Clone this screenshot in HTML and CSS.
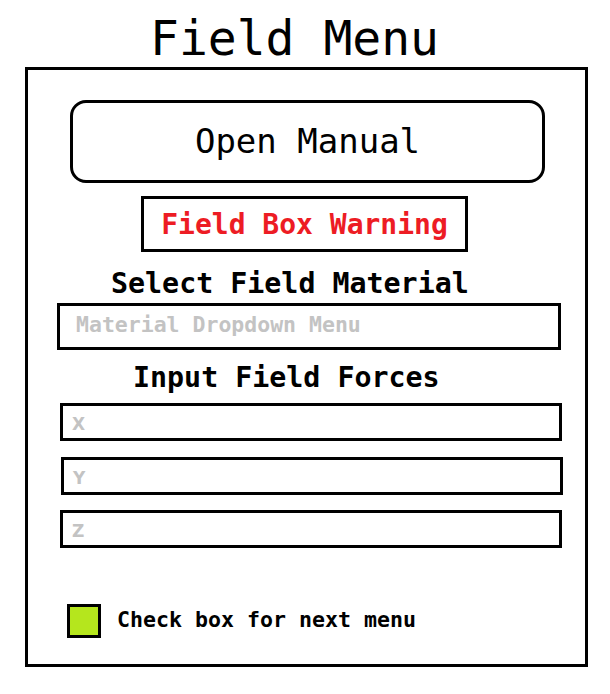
FILE: index.html
```html
<!DOCTYPE html>
<html>
<head>
<meta charset="utf-8">
<link rel="stylesheet" href="styles.css">
</head>
<body>
<h1 class="title">Field Menu</h1>
<div class="panel">
  <div class="manual-btn">Open Manual</div>
  <div class="warning">Field Box Warning</div>
  <div class="label label-material">Select Field Material</div>
  <div class="dropdown">Material Dropdown Menu</div>
  <div class="label label-forces">Input Field Forces</div>
  <div class="force force-x">X</div>
  <div class="force force-y">Y</div>
  <div class="force force-z">Z</div>
  <div class="check-row">
    <span class="checkbox"></span>
    <span class="check-text">Check box for next menu</span>
  </div>
</div>
</body>
</html>
```

FILE: styles.css
```css
html, body {
  margin: 0;
  padding: 0;
  background: #ffffff;
}
body {
  font-family: "DejaVu Sans Mono", "Liberation Mono", monospace;
  color: #000000;
  width: 610px;
  height: 694px;
  overflow: hidden;
}
.title {
  margin: 0;
  padding: 10px 21px 0 0;
  height: 56px;
  font-size: 48px;
  font-weight: normal;
  line-height: 56px;
  text-align: center;
}
.panel {
  box-sizing: border-box;
  margin: 1px 0 0 25px;
  width: 563px;
  height: 600px;
  border: 3px solid #000;
}
.manual-btn {
  box-sizing: border-box;
  margin: 30px 0 0 42px;
  width: 475px;
  height: 83px;
  border: 3px solid #000;
  border-radius: 16px;
  display: flex;
  align-items: center;
  justify-content: center;
  font-size: 34px;
  padding-bottom: 2px;
}
.warning {
  box-sizing: border-box;
  margin: 13px 0 0 113px;
  width: 327px;
  height: 56px;
  border: 3px solid #000;
  display: flex;
  align-items: center;
  justify-content: center;
  font-size: 28px;
  font-weight: bold;
  color: #ed1c24;
}
.label {
  font-size: 28.3px;
  line-height: 28px;
  font-weight: bold;
}
.label-material {
  margin: 18px 0 0 83px;
}
.label-forces {
  margin: 14px 0 0 105px;
}
.dropdown {
  box-sizing: border-box;
  margin: 5px 0 0 29px;
  width: 504px;
  height: 47px;
  border: 3px solid #000;
  padding: 8px 0 0 16px;
  font-size: 21.5px;
  line-height: 21px;
  font-weight: bold;
  color: #c3c3c3;
}
.force {
  box-sizing: border-box;
  width: 502px;
  height: 38px;
  border: 3px solid #000;
  padding: 8px 0 0 9px;
  font-family: "DejaVu Sans", Verdana, sans-serif;
  font-size: 17px;
  font-weight: bold;
  line-height: 20px;
  color: #c3c3c3;
}
.force-x { margin: 11px 0 0 32px; }
.force-y { margin: 16px 0 0 33px; }
.force-z { margin: 15px 0 0 32px; }
.check-row {
  margin: 56px 0 0 39px;
  display: flex;
  align-items: center;
  gap: 16px;
}
.checkbox {
  box-sizing: border-box;
  width: 34px;
  height: 34px;
  border: 3px solid #000;
  background: #b5e61d;
}
.check-text {
  font-size: 21.6px;
  font-weight: bold;
  line-height: 21px;
  padding-bottom: 4px;
}
```
